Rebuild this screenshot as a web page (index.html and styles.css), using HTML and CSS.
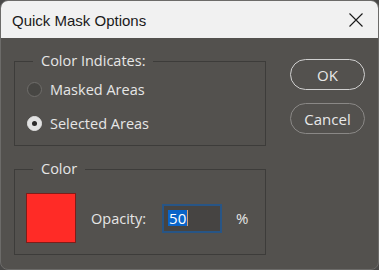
FILE: index.html
```html
<!DOCTYPE html>
<html lang="en">
<head>
    <meta charset="UTF-8">
    <meta name="viewport" content="width=device-width, initial-scale=1.0">
    <title>Quick Mask Options</title>
    <link rel="stylesheet" href="styles.css">
</head>
<body>
    <div class="dialog">
        <!-- Title bar -->
        <div class="titlebar">
            <span class="title">Quick Mask Options</span>
            <svg class="close" width="14" height="14" viewBox="0 0 14 14">
                <path d="M0.5 0.5 L13.5 13.5 M13.5 0.5 L0.5 13.5" stroke="#1a1a1a" stroke-width="1.1" fill="none"/>
            </svg>
        </div>

        <div class="content">
            <div class="groups">
                <!-- Color indicates -->
                <fieldset class="group">
                    <legend>Color Indicates:</legend>
                    <div class="radios">
                        <label class="radio-row">
                            <span class="radio"></span>
                            <span>Masked Areas</span>
                        </label>
                        <label class="radio-row">
                            <span class="radio checked"></span>
                            <span>Selected Areas</span>
                        </label>
                    </div>
                </fieldset>

                <!-- Color -->
                <fieldset class="group color-group">
                    <legend>Color</legend>
                    <div class="color-row">
                        <div class="swatch"></div>
                        <span class="label">Opacity:</span>
                        <div class="input"><span class="selected">50</span><span class="caret"></span></div>
                        <span class="percent">%</span>
                    </div>
                </fieldset>
            </div>

            <div class="buttons">
                <button class="button primary">OK</button>
                <button class="button">Cancel</button>
            </div>
        </div>
    </div>
</body>
</html>
```

FILE: styles.css
```css
/* General Styles */
html, body {
    margin: 0;
    background-color: #4a4948;
}

body {
    font-family: "Open Sans", "Liberation Sans", sans-serif;
    color: #e6e6e6;
}

/* Dialog window */
.dialog {
    width: 379px;
    height: 270px;
    box-sizing: border-box;
    border: 1px solid #6c6b69;
    border-radius: 8px;
    overflow: hidden;
    background-color: #53514e;
    display: flex;
    flex-direction: column;
}

/* Title bar */
.titlebar {
    height: 37px;
    background-color: #f1f1f1;
    display: flex;
    align-items: center;
    justify-content: space-between;
    padding: 0 15px 0 11px;
    flex-shrink: 0;
}

.title {
    font-family: "Liberation Sans", Arial, sans-serif;
    font-size: 15px;
    color: #1a1a1a;
    padding-top: 1px;
}

.close {
    display: block;
    margin-top: 1px;
}

/* Content */
.content {
    display: flex;
    padding: 14px 0 0 13px;
    gap: 24px;
}

.groups {
    display: flex;
    flex-direction: column;
    gap: 14px;
}

.group {
    width: 250px;
    margin: 0;
    padding: 0;
    border: 1px solid #3d3c3a;
    font-size: 14px;
}

.group legend {
    margin-left: 18px;
    padding: 0 8px;
    line-height: 18px;
    font-size: 14.5px;
}

/* Radio buttons */
.radios {
    display: flex;
    flex-direction: column;
    gap: 10px;
    padding: 7px 0 10px 12px;
}

.radio-row {
    display: flex;
    align-items: center;
    gap: 8px;
    height: 24px;
    font-size: 14.5px;
}

.radio {
    width: 13px;
    height: 13px;
    border-radius: 50%;
    border: 1px solid #6f6d6a;
    background-color: #474643;
    position: relative;
}

.radio.checked {
    background-color: #e2e2e2;
    border-color: #e2e2e2;
}

.radio.checked::after {
    content: "";
    position: absolute;
    left: 4px;
    top: 4px;
    width: 5px;
    height: 5px;
    border-radius: 50%;
    background-color: #2b2a29;
}

/* Color group */
.color-row {
    display: flex;
    align-items: center;
    padding: 15px 0 11px 11px;
}

.swatch {
    width: 48px;
    height: 48px;
    background-color: #ff2b26;
    border: 1px solid #7e1d19;
}

.label {
    margin-left: 15px;
    font-size: 14.5px;
}

.input {
    margin-left: 16px;
    width: 52px;
    height: 25px;
    border: 2px solid #285585;
    background-color: #464442;
    display: flex;
    align-items: center;
    padding-left: 4px;
}

.selected {
    background-color: #0a64c8;
    color: #ffffff;
    font-size: 15px;
    line-height: 16px;
    padding: 0 1px;
}

.caret {
    width: 1px;
    height: 16px;
    background-color: #d8a27a;
}

.percent {
    margin-left: 14px;
    font-size: 15px;
}

/* Buttons */
.buttons {
    display: flex;
    flex-direction: column;
    gap: 13px;
    padding-top: 7px;
}

.button {
    width: 75px;
    height: 31px;
    border-radius: 16px;
    border: 1px solid #8a8886;
    background-color: transparent;
    color: #e8e8e8;
    font-family: "Open Sans", "Liberation Sans", sans-serif;
    font-size: 15px;
    padding: 0;
}

.primary {
    border: 1.5px solid #d0d0d0;
}
```
